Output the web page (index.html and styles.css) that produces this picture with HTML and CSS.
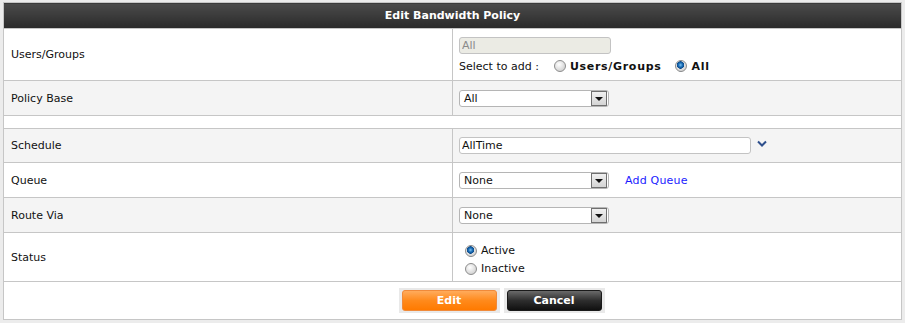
FILE: index.html
```html
<!DOCTYPE html>
<html lang="en">
<head>
    <meta charset="UTF-8">
    <title>Edit Bandwidth Policy</title>
    <link rel="stylesheet" href="styles.css">
</head>
<body>

    <table class="policy-form">
        <tr class="head">
            <th colspan="2">Edit Bandwidth Policy</th>
        </tr>

        <!-- Users / Groups -->
        <tr class="row-users">
            <td class="label">Users/Groups</td>
            <td class="value">
                <input class="text-box disabled" type="text" value="All" disabled>
                <div class="select-add">
                    <span>Select to add :</span>
                    <label class="radio bold"><input type="radio" name="add"> Users/Groups</label>
                    <label class="radio bold"><input type="radio" name="add" checked> All</label>
                </div>
            </td>
        </tr>

        <tr class="alt row-std">
            <td class="label">Policy Base</td>
            <td class="value"><div class="combo"><span>All</span><span class="drop"></span></div></td>
        </tr>

        <tr class="row-empty"><td></td><td></td></tr>

        <tr class="alt row-sched">
            <td class="label">Schedule</td>
            <td class="value">
                <input class="text-box wide" type="text" value="AllTime"><svg class="chevron" width="10" height="7" viewBox="0 0 10 7"><path d="M1 1.5 L5 5.5 L9 1.5" fill="none" stroke="#2e4f8c" stroke-width="2"/></svg>
            </td>
        </tr>

        <tr class="row-std">
            <td class="label">Queue</td>
            <td class="value">
                <div class="combo"><span>None</span><span class="drop"></span></div><a class="link" href="#">Add Queue</a>
            </td>
        </tr>

        <tr class="alt row-std">
            <td class="label">Route Via</td>
            <td class="value"><div class="combo"><span>None</span><span class="drop"></span></div></td>
        </tr>

        <tr class="row-status">
            <td class="label">Status</td>
            <td class="value status">
                <label class="radio"><input type="radio" name="status" checked> Active</label>
                <label class="radio"><input type="radio" name="status"> Inactive</label>
            </td>
        </tr>

        <tr class="row-buttons">
            <td colspan="2">
                <div class="buttons">
                    <span class="btn-frame"><button class="btn edit">Edit</button></span>
                    <span class="btn-frame"><button class="btn cancel">Cancel</button></span>
                </div>
            </td>
        </tr>
    </table>

</body>
</html>
```

FILE: styles.css
```css
/* Page */
body {
    margin: 0;
    padding: 2px 3px;
    background: #ececec;
    font-family: "DejaVu Sans", Verdana, sans-serif;
    font-size: 11px;
    color: #111;
}

.policy-form {
    width: 899px;
    border-collapse: collapse;
    border: 1px solid #c6c6c6;
    background: #fff;
}
.policy-form td {
    border-top: 1px solid #c6c6c6;
    border-bottom: 1px solid #c6c6c6;
    padding: 0;
    vertical-align: middle;
}

/* Header */
.head th {
    height: 25px;
    padding: 0;
    background: linear-gradient(to bottom, #4b4b4b, #2a2a2a);
    color: #fff;
    font-size: 11px;
    font-weight: bold;
    text-align: center;
    border-bottom: 1px solid #c6c6c6;
}

.label {
    width: 441px;
    padding-left: 7px !important;
    border-right: 1px solid #c6c6c6;
}
.value {
    padding-left: 6px !important;
}
.alt td {
    background: #f4f4f4;
}

/* Row heights */
.row-users td { height: 51px; }
.row-std td { height: 34px; }
.row-empty td { height: 12px; }
.row-sched td { height: 33px; }
.row-status td { height: 48px; }
.row-buttons td { height: 37px; }

/* Inputs */
.text-box {
    display: block;
    box-sizing: border-box;
    height: 17px;
    border: 1px solid #c3c3c3;
    border-radius: 3px;
    padding: 0 2px;
    font-family: inherit;
    font-size: 11px;
    color: #111;
    background: #fff;
}
.text-box.disabled {
    width: 152px;
    background: #ebebe4;
    color: #8a8a8a;
}
.text-box.wide {
    display: inline-block;
    width: 292px;
    vertical-align: middle;
}
.chevron {
    vertical-align: middle;
    margin-left: 6px;
    margin-top: -5px;
}

.select-add {
    margin-top: 6px;
    display: flex;
    align-items: center;
}
.select-add span {
    margin-right: 15px;
}
.radio {
    display: inline-flex;
    align-items: center;
    margin-right: 14px;
}
.radio.bold {
    font-weight: bold;
    letter-spacing: 0.7px;
}

/* Radio buttons */
.radio input {
    appearance: none;
    -webkit-appearance: none;
    width: 12px;
    height: 12px;
    margin: 0 4px 0 0;
    border: 1px solid #8e8e8e;
    border-radius: 50%;
    background: radial-gradient(circle at 40% 35%, #ffffff, #d6d6d6 70%, #bdbdbd);
    box-sizing: border-box;
}
.radio input:checked {
    background: radial-gradient(circle at 45% 40%, #7fc3f0 0, #1d6fb8 2px, #0b4a8a 3.5px, transparent 4px),
                radial-gradient(circle at 40% 35%, #ffffff, #d6d6d6 70%, #bdbdbd);
}

.row-status td.status {
    height: 43px;
    padding-top: 5px;
}
.status .radio {
    display: flex;
    margin-left: 6px;
    line-height: 18px;
}

/* Fake select */
.combo {
    display: inline-flex;
    align-items: center;
    justify-content: space-between;
    box-sizing: border-box;
    width: 150px;
    height: 17px;
    border: 1px solid #b5b5b5;
    border-radius: 3px;
    padding-left: 4px;
    background: #fff;
    vertical-align: middle;
}
.drop {
    position: relative;
    width: 14px;
    height: 13px;
    margin-right: 1px;
    border: 1px solid #6f6f6f;
    background: linear-gradient(to bottom, #f0f0f0, #d4d4d4);
}
.drop::after {
    content: "";
    position: absolute;
    left: 3px;
    top: 5px;
    border-left: 4px solid transparent;
    border-right: 4px solid transparent;
    border-top: 4px solid #111;
}

.link {
    margin-left: 16px;
    color: #1a1aff;
    text-decoration: none;
    letter-spacing: 0.2px;
    vertical-align: middle;
}

/* Buttons */
.buttons {
    display: flex;
    justify-content: center;
    gap: 4px;
    padding-left: 98px;
}
.btn-frame {
    display: inline-block;
    padding: 2px 3px;
    background: #e9e9e9;
}
.btn {
    display: block;
    width: 95px;
    height: 21px;
    border-radius: 3px;
    font-family: inherit;
    font-size: 11px;
    font-weight: bold;
    color: #fff;
    cursor: pointer;
}
.btn.edit {
    border: 1px solid #f08a3a;
    background: linear-gradient(to bottom, #ffab5c, #ff8a1c 50%, #ff7a00);
}
.btn.cancel {
    border: 1px solid #1a1a1a;
    background: linear-gradient(to bottom, #6a6a6a, #2e2e2e 50%, #101010);
}
```
